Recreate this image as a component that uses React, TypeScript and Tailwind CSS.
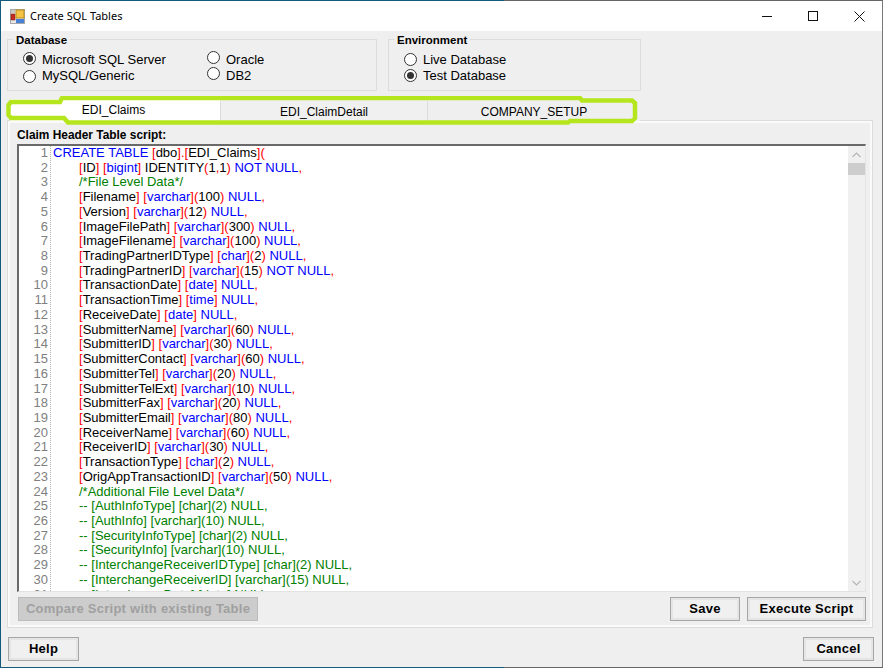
import { Fragment } from "react";

// Script shown in the editor, one entry per line
const SCRIPT = [
  "CREATE TABLE [dbo].[EDI_Claims](",
  "\t[ID] [bigint] IDENTITY(1,1) NOT NULL,",
  "\t/*File Level Data*/",
  "\t[Filename] [varchar](100) NULL,",
  "\t[Version] [varchar](12) NULL,",
  "\t[ImageFilePath] [varchar](300) NULL,",
  "\t[ImageFilename] [varchar](100) NULL,",
  "\t[TradingPartnerIDType] [char](2) NULL,",
  "\t[TradingPartnerID] [varchar](15) NOT NULL,",
  "\t[TransactionDate] [date] NULL,",
  "\t[TransactionTime] [time] NULL,",
  "\t[ReceiveDate] [date] NULL,",
  "\t[SubmitterName] [varchar](60) NULL,",
  "\t[SubmitterID] [varchar](30) NULL,",
  "\t[SubmitterContact] [varchar](60) NULL,",
  "\t[SubmitterTel] [varchar](20) NULL,",
  "\t[SubmitterTelExt] [varchar](10) NULL,",
  "\t[SubmitterFax] [varchar](20) NULL,",
  "\t[SubmitterEmail] [varchar](80) NULL,",
  "\t[ReceiverName] [varchar](60) NULL,",
  "\t[ReceiverID] [varchar](30) NULL,",
  "\t[TransactionType] [char](2) NULL,",
  "\t[OrigAppTransactionID] [varchar](50) NULL,",
  "\t/*Additional File Level Data*/",
  "\t-- [AuthInfoType] [char](2) NULL,",
  "\t-- [AuthInfo] [varchar](10) NULL,",
  "\t-- [SecurityInfoType] [char](2) NULL,",
  "\t-- [SecurityInfo] [varchar](10) NULL,",
  "\t-- [InterchangeReceiverIDType] [char](2) NULL,",
  "\t-- [InterchangeReceiverID] [varchar](15) NULL,",
  "\t-- [InterchangeDate] [date] NULL,",
];

const BLUE_WORDS = ["CREATE", "TABLE", "NOT", "NULL", "varchar", "char", "bigint", "date", "time"];

function SqlLine({ text }: { text: string }) {
  const body = text.replace("\t", "");
  const indent = text.startsWith("\t") ? "pl-[26px]" : "";

  if (body.startsWith("/*") || body.startsWith("--")) {
    return <div className={`h-[14.72px] whitespace-pre text-[#008000] ${indent}`}>{body}</div>;
  }

  const tokens = body.split(/([\[\]().,])/).filter(Boolean);
  return (
    <div className={`h-[14.72px] whitespace-pre ${indent}`}>
      {tokens.map((tok, i) => {
        if (/^[\[\]().,]$/.test(tok)) {
          return <span key={i} className="text-[#ff0000]">{tok}</span>;
        }
        const words = tok.split(/(\s+)/);
        return (
          <Fragment key={i}>
            {words.map((w, j) =>
              BLUE_WORDS.includes(w) ? (
                <span key={j} className="text-[#0000ff]">{w}</span>
              ) : (
                <span key={j} className="text-black">{w}</span>
              )
            )}
          </Fragment>
        );
      })}
    </div>
  );
}

// nudge: margin that moves the circle off the row's centre, the old form has uneven radios
function Radio({ label, checked, nudge = "" }: { label: string; checked?: boolean; nudge?: string }) {
  return (
    <div className="flex h-[16px] items-center">
      <span className={`flex h-[13px] w-[13px] flex-none items-center justify-center rounded-full border border-[#333333] bg-white ${nudge}`}>
        {checked && <span className="h-[7px] w-[7px] rounded-full bg-[#333333]" />}
      </span>
      <span className="ml-[6px] mt-[2px] whitespace-nowrap text-[13px] text-black">{label}</span>
    </div>
  );
}

function GroupBox({ title, className, children }: { title: string; className: string; children: React.ReactNode }) {
  return (
    <div className={`relative h-[52px] border border-[#dcdcdc] ${className}`}>
      <span className="absolute -top-[7px] left-[5px] bg-[#efefef] px-[3px] text-[11.5px] font-bold leading-[14px] text-black">
        {title}
      </span>
      {children}
    </div>
  );
}

function WinButton({ label, className, disabled }: { label: string; className: string; disabled?: boolean }) {
  if (disabled) {
    return (
      <div className={`flex h-[24px] items-center justify-center border border-[#bcbcbc] bg-[#cccccc] text-[13px] font-bold tracking-[0.25px] text-[#a0a0a0] ${className}`}>
        {label}
      </div>
    );
  }
  return (
    <div className={`border border-[#a6a6a6] ${className}`}>
      <div className="flex h-[22px] items-center justify-center border-2 border-[#e5e5e5] bg-[#f0f0f0] text-[13px] font-bold tracking-[0.25px] text-black">
        {label}
      </div>
    </div>
  );
}

function AppIcon() {
  return (
    <svg width="15" height="15" viewBox="0 0 15 15" className="flex-none">
      <rect x="0.5" y="0.5" width="14" height="14" fill="#e8e8e8" stroke="#a8a8a8" />
      <rect x="1" y="1" width="4" height="3" fill="#c8c8c8" />
      <rect x="1" y="5" width="4" height="6" fill="#c62a1e" stroke="#7a2018" strokeWidth="0.5" />
      <rect x="6" y="1" width="8" height="8" fill="#f6c445" stroke="#b98a1c" />
      <rect x="6" y="10" width="8" height="4" fill="#4a7fd6" />
    </svg>
  );
}

export default function App() {
  return (
    <div className="flex h-[668px] w-[883px] flex-col overflow-hidden bg-[#efefef] [font-family:'Liberation_Sans',Arial,sans-serif]">
      {/* Window top edge: wallpaper shows through on the left part */}
      <div className="flex h-px flex-none">
        <div className="w-[504px] bg-[#135a7c]" />
        <div className="flex-1 bg-[#666666]" />
      </div>

      <div className="flex min-h-0 flex-1 border-r border-[#777777]">
        <div className="w-px flex-none bg-[#135a7c]" />
        <div className="flex min-w-0 flex-1 flex-col">
          {/* Title bar */}
          <div className="flex h-[30px] flex-none items-center bg-white pl-[9px]">
            <AppIcon />
            <span className="ml-[5px] text-[11px] text-black [font-family:'Noto_Sans',sans-serif]">Create SQL Tables</span>
            <div className="ml-auto flex h-full">
              <div className="flex w-[46px] items-center justify-center">
                <svg width="10" height="10" viewBox="0 0 10 10"><path d="M0 5.5H10" stroke="#111" fill="none" /></svg>
              </div>
              <div className="flex w-[46px] items-center justify-center">
                <svg width="10" height="10" viewBox="0 0 10 10"><rect x="0.5" y="0.5" width="9" height="9" stroke="#111" fill="none" /></svg>
              </div>
              <div className="flex w-[46px] items-center justify-center">
                <svg width="11" height="11" viewBox="0 0 11 11"><path d="M0.5 0.5L10.5 10.5M10.5 0.5L0.5 10.5" stroke="#111" fill="none" /></svg>
              </div>
            </div>
          </div>

          {/* Database / Environment groups */}
          <div className="mt-[8px] flex flex-none pl-[6px]">
            <GroupBox title="Database" className="w-[370px]">
              <div className="grid grid-cols-[184px_1fr] pl-[15px] pt-[11px]">
                <Radio label="Microsoft SQL Server" checked nudge="mb-[2px]" />
                <Radio label="Oracle" nudge="mb-[4px]" />
                <Radio label="MySQL/Generic" nudge="mt-[2px]" />
                <Radio label="DB2" nudge="mb-[4px]" />
              </div>
            </GroupBox>
            <GroupBox title="Environment" className="ml-[11px] w-[253px]">
              <div className="pl-[15px] pt-[11px]">
                <Radio label="Live Database" />
                <Radio label="Test Database" checked />
              </div>
            </GroupBox>
          </div>

          {/* Tabs */}
          <div className="relative mt-[7px] flex min-h-0 flex-1 flex-col px-[6px]">
            <div className="z-10 -mb-px flex h-[23px] flex-none items-end pl-[3px]">
              <div className="flex h-[22px] w-[210px] items-center justify-center bg-white pb-[1px] pr-[3px] text-[12px] text-black">EDI_Claims</div>
              <div className="flex h-[20px] w-[208px] items-center justify-center border-x border-[#dcdcdc] bg-[#f0f0f0] pt-[1px] text-[12px] text-black">EDI_ClaimDetail</div>
              <div className="flex h-[20px] w-[212px] items-center justify-center bg-[#efefef] pt-[1px] text-[12px] text-black">COMPANY_SETUP</div>
            </div>

            {/* Tab page */}
            <div className="flex h-[508px] w-[866px] flex-none flex-col border border-[#dcdcdc]">
              <div className="flex min-h-0 flex-1 flex-col border-2 border-[#fafafa] pl-[7px] pr-[4px]">
                <div className="mt-[5px] h-[16px] flex-none text-[11.9px] font-bold leading-[14px] text-black">Claim Header Table script:</div>

                {/* SQL editor */}
                <div className="flex h-[448px] flex-none overflow-hidden border-l-2 border-t-2 border-b border-r border-b-[#e3e3e3] border-l-[#696969] border-r-[#e3e3e3] border-t-[#696969] bg-white text-[13px] leading-[14.72px]">
                  <div className="w-[29px] flex-none text-right text-[#808080]">
                    {SCRIPT.map((_, i) => (
                      <div key={i} className="h-[14.72px]">{i + 1}</div>
                    ))}
                  </div>
                  <div className="mx-[2px] flex-none border-l border-dotted border-[#b0b0b0]" />
                  <div className="min-w-0 flex-1">
                    {SCRIPT.map((line, i) => (
                      <SqlLine key={i} text={line} />
                    ))}
                  </div>
                  {/* Scrollbar */}
                  <div className="flex w-[17px] flex-none flex-col items-center bg-[#f0f0f0]">
                    <div className="flex h-[17px] flex-none items-center justify-center">
                      <svg width="9" height="6" viewBox="0 0 9 6"><path d="M0.5 5L4.5 1L8.5 5" stroke="#b5b5b5" strokeWidth="1.2" fill="none" /></svg>
                    </div>
                    <div className="h-[12px] w-full flex-none bg-[#cdcdcd]" />
                    <div className="mt-auto flex h-[17px] flex-none items-center justify-center">
                      <svg width="9" height="6" viewBox="0 0 9 6"><path d="M0.5 1L4.5 5L8.5 1" stroke="#b5b5b5" strokeWidth="1.2" fill="none" /></svg>
                    </div>
                  </div>
                </div>

                <div className="mt-[5px] flex flex-none pl-px">
                  <WinButton label="Compare Script with existing Table" className="w-[240px]" disabled />
                  <WinButton label="Save" className="ml-auto w-[70px]" />
                  <WinButton label="Execute Script" className="ml-[7px] w-[119px]" />
                </div>
              </div>
            </div>

            {/* Hand-drawn highlight around the tab strip */}
            <svg width="883" height="40" viewBox="0 0 883 40" className="pointer-events-none absolute -left-px -top-[2px] z-20">
              <path
                d="M8.5 9L11 6L60 6L62 2L580 2L582 4.5L632 4.5L635 7L635 22L632 25L570 25L568 26.5L68 26.5L64 22L11 22L8.5 19Z"
                fill="none"
                stroke="#b5e61d"
                strokeWidth="4.5"
              />
            </svg>
          </div>

          {/* Footer buttons */}
          <div className="flex h-[38px] flex-none justify-between pl-[7px] pr-[8px] pt-[8px]">
            <WinButton label="Help" className="h-[24px] w-[71px]" />
            <WinButton label="Cancel" className="h-[24px] w-[71px]" />
          </div>
        </div>
      </div>

      {/* Window bottom edge */}
      <div className="flex h-px flex-none">
        <div className="w-[504px] bg-[#135a7c]" />
        <div className="flex-1 bg-[#666666]" />
      </div>
    </div>
  );
}
